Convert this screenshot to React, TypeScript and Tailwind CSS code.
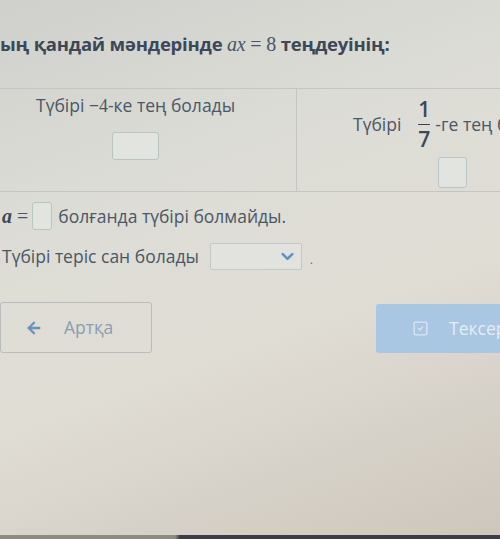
import { ArrowLeft, ChevronDown, SquareCheck } from 'lucide-react';

const font = { fontFamily: '"Open Sans", "Noto Sans", sans-serif' };

function Box({ className }: { className: string }) {
  return <span className={`inline-block border border-[#b9c4c4] rounded-[3px] bg-[#e2e4e0] ${className}`} />;
}

export default function App() {
  return (
    <div
      style={font}
      className="relative w-[500px] h-[539px] overflow-hidden bg-[linear-gradient(160deg,#cfd0cc_0%,#dcdcd6_30%,#e0ddd5_60%,#cdc6bc_100%)] text-[#4a5768]"
    >
      {/* Заголовок */}
      <div className="h-[88px] pt-[29px]">
        <h1 className="text-[18.5px] font-bold text-[#3c4858] whitespace-nowrap tracking-[-0.2px]">
          ың қандай мәндерінде{' '}
          <span className="font-['Liberation_Serif',serif] font-normal text-[20px] text-[#4a5566]">
            <i>ax</i> = 8
          </span>{' '}
          теңдеуінің:
        </h1>
      </div>

      {/* Кесте */}
      <div className="border-t border-b border-[#c4c6c4] grid grid-cols-[297px_1fr] h-[104px]">
        <div className="border-r border-[#c4c6c4] pt-[3px] pl-[36px]">
          <div className="inline-flex flex-col items-center">
            <span className="text-[17.5px] whitespace-nowrap">
              Түбірі −<span className="font-['Liberation_Serif',serif] text-[18px]">4</span>-ке тең болады
            </span>
            <Box className="w-[47px] h-[28px] mt-[12px]" />
          </div>
        </div>
        <div className="flex flex-col pl-[56px] pt-[9px]">
          <div className="flex items-center gap-[17px] whitespace-nowrap text-[17.5px]">
            <span>Түбірі</span>
            <span className="flex flex-col items-center text-[21px] leading-[23px] font-semibold text-[#3c4858]">
              <span>1</span>
              <span className="w-[12px] border-t-[1.5px] border-[#3c4858] my-[3px]" />
              <span>7</span>
            </span>
            <span className="-ml-[12px]">-ге тең болады</span>
          </div>
          <Box className="w-[29px] h-[31px] mt-[6px] ml-[85px]" />
        </div>
      </div>

      {/* a = */}
      <div className="flex items-center h-[44px] pl-[2px] mt-[2px]">
        <span className="font-['Liberation_Serif',serif] italic font-bold text-[20px] text-[#3c4858]">a</span>
        <span className="font-['Liberation_Serif',serif] text-[20px] ml-[5px] text-[#4a5566]">=</span>
        <Box className="w-[20px] h-[28px] ml-[4px]" />
        <span className="text-[17.5px] ml-[6px]">болғанда түбірі болмайды.</span>
      </div>

      {/* Түбірі теріс */}
      <div className="flex items-center h-[30px] pl-[2px] mt-[3px]">
        <span className="text-[17.5px]">Түбірі теріс сан болады</span>
        <div className="ml-[11px] w-[92px] h-[27px] border border-[#c4c8c8] rounded-[2px] bg-[#e2e3df] flex items-center justify-end pr-[4px]">
          <ChevronDown size={19} strokeWidth={3.2} className="text-[#5b93c9]" />
        </div>
        <span className="ml-[8px] mt-[8px] text-[11px]">.</span>
      </div>

      {/* Батырмалар */}
      <div className="flex justify-between mt-[31px]">
        <button className="w-[152px] h-[51px] border border-[#b9bcbb] rounded-[3px] flex items-center pl-[24px] gap-[21px] text-[17.5px] text-[#8a9db2]">
          <ArrowLeft size={18} strokeWidth={3.2} className="text-[#6a92b9]" />
          <span>Артқа</span>
        </button>
        <button className="w-[124px] h-[49px] mt-[2px] bg-[#a9c6e3] rounded-l-[3px] flex items-center pl-[36px] gap-[20px] text-[17.5px] text-[#e4edf6] whitespace-nowrap overflow-hidden">
          <SquareCheck size={17} strokeWidth={2} className="text-[#dbe6f1] shrink-0" />
          <span>Тексеру</span>
        </button>
      </div>

      {/* Экран жиегі */}
      <div className="absolute left-0 right-0 bottom-0 h-[4px] bg-[linear-gradient(90deg,#8e8a84_0%,#8e8a84_35%,#3a3e44_36%,#3a3e44_100%)]" />
    </div>
  );
}
